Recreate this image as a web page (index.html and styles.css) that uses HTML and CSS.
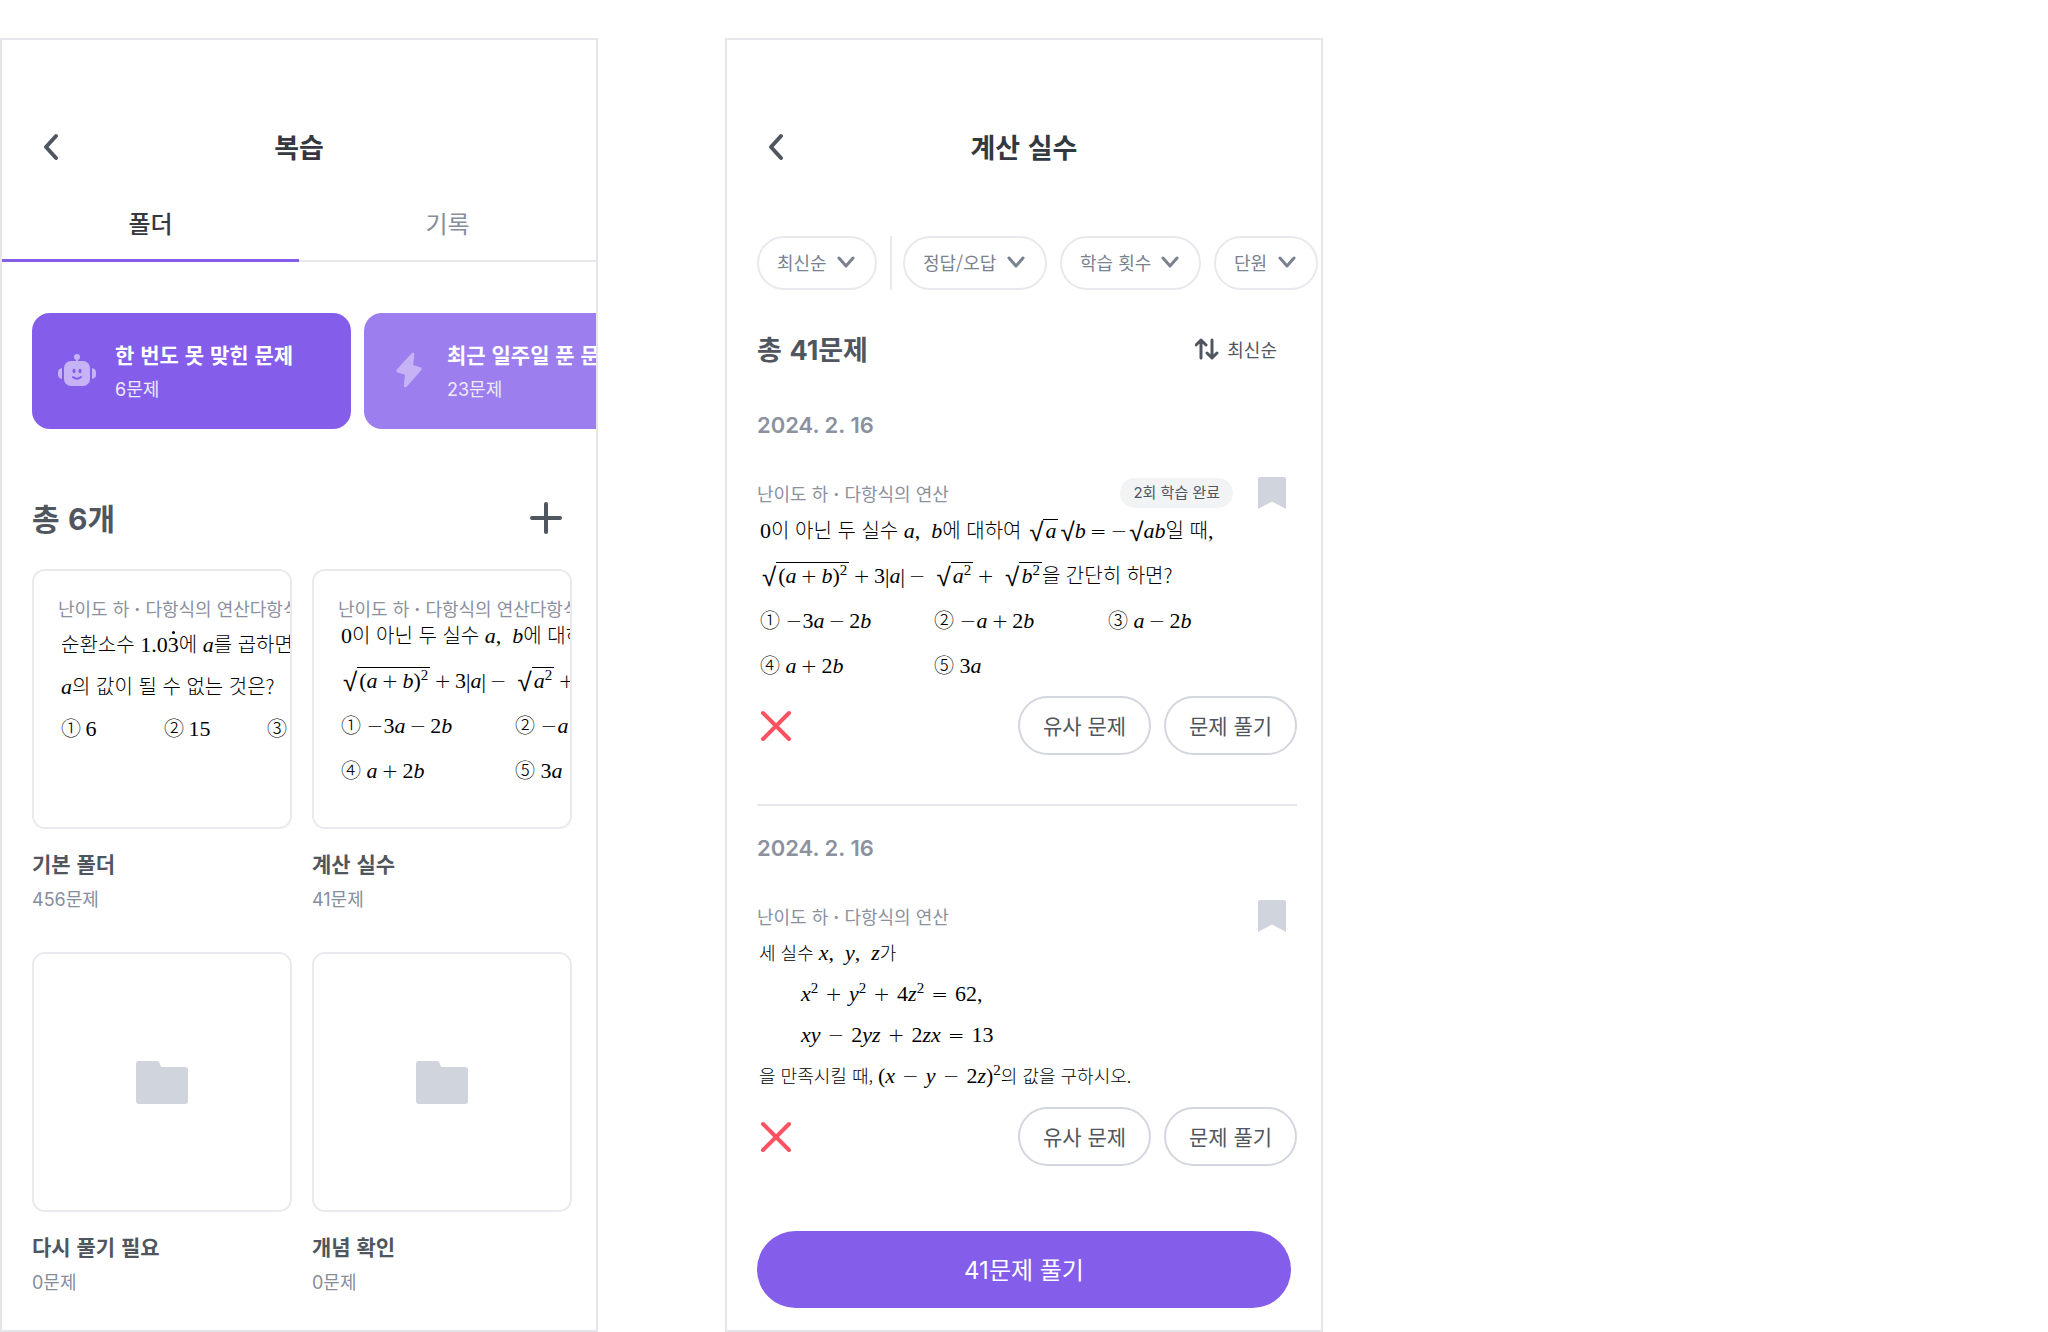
FILE: index.html
```
<!DOCTYPE html>
<html lang="ko">
<head>
  <meta charset="UTF-8" />
  <meta name="viewport" content="width=device-width, initial-scale=1.0"/>
  <title>복습</title>
  <link rel="stylesheet" href="styles.css">
</head>
<body>
  <!-- Folder screen -->
  <main class="phone">
    <header class="header">
      <button class="back" aria-label="뒤로"><svg width="16" height="28" viewBox="0 0 16 28"><path d="M13 3L3 14l10 11"/></svg></button>
      <h1>복습</h1>
    </header>
    <nav class="tabs">
      <button class="tab active">폴더</button>
      <button class="tab">기록</button>
    </nav>

    <section class="banners">
      <a class="banner" href="#">
        <svg class="banner-icon" width="40" height="34" viewBox="0 0 40 34">
          <circle cx="20" cy="4" r="3"/>
          <rect x="19" y="5" width="2" height="5"/>
          <rect x="7" y="8" width="26" height="25" rx="7"/>
          <path d="M5 15v11a5 5 0 0 1-4-5.500A5 5 0 0 1 5 15zM35 15v11a5 5 0 0 0 4-5.500A5 5 0 0 0 35 15z"/>
          <ellipse class="face" cx="17" cy="18" rx="1.500" ry="2.200"/>
          <ellipse class="face" cx="23" cy="18" rx="1.500" ry="2.200"/>
          <path class="smile" d="M16 24q4 3.500 8 0"/>
        </svg>
        <div>
          <h2>한 번도 못 맞힌 문제</h2>
          <p><span class="num">6</span>문제</p>
        </div>
      </a>
      <a class="banner light" href="#">
        <svg class="banner-icon" width="40" height="36" viewBox="0 0 40 36">
          <path d="M22.500 1.500c1.200-1.300 3-.6 2.800 1.200L24.200 13l7 2.200c1.600.5 2 2 .8 3.300L17.600 34.700c-1.200 1.200-3 .5-2.800-1.200L16 22.700l-7.200-2.200c-1.500-.5-1.900-2-.8-3.200z"/>
        </svg>
        <div>
          <h2>최근 일주일 푼 문제</h2>
          <p><span class="num">23</span>문제</p>
        </div>
      </a>
    </section>

    <div class="folders-head">
      <h2>총 <span class="num">6</span>개</h2>
      <button class="add" aria-label="폴더 추가"><svg width="32" height="32" viewBox="0 0 32 32"><path d="M16 2v28M2 16h28"/></svg></button>
    </div>

    <section class="folders">
      <article>
        <div class="thumb preview">
          <p class="label">난이도 하 <span class="num">·</span> 다항식의 연산다항식</p>
          <div class="problem compact">
            <p>순환소수 <b>1.0<span class="dot">3</span></b>에 <i>a</i>를 곱하면</p>
            <p><i>a</i>의 값이 될 수 없는 것은?</p>
            <ul class="choices narrow">
              <li>① <b>6</b></li>
              <li>② <b>15</b></li>
              <li>③</li>
            </ul>
          </div>
        </div>
        <h3>기본 폴더</h3>
        <p class="count"><span class="num">456</span>문제</p>
      </article>
      <article>
        <div class="thumb preview">
          <p class="label">난이도 하 <span class="num">·</span> 다항식의 연산다항식</p>
          <div class="problem raised">
            <p><b>0</b>이 아닌 두 실수 <i>a</i><b>,&ensp;</b><i>b</i>에 대하여</p>
            <p><span class="root">√</span><span class="bar"><b>(</b><i>a</i><span class="op">+</span><i>b</i><b>)<sup>2</sup></b></span><span class="op">+</span><b>3|</b><i>a</i><b>|</b><span class="op">−</span><span class="root">√</span><span class="bar"><i>a</i><b><sup>2</sup></b></span><span class="op">+</span></p>
            <ul class="choices">
              <li>① <span class="sign">−</span><b>3</b><i>a</i><span class="op">−</span><b>2</b><i>b</i></li>
              <li>② <span class="sign">−</span><i>a</i></li>
            </ul>
            <ul class="choices">
              <li>④ <i>a</i><span class="op">+</span><b>2</b><i>b</i></li>
              <li>⑤ <b>3</b><i>a</i></li>
            </ul>
          </div>
        </div>
        <h3>계산 실수</h3>
        <p class="count"><span class="num">41</span>문제</p>
      </article>
      <article>
        <div class="thumb empty">
          <svg width="52" height="44" viewBox="0 0 52 44"><path d="M3 1h18q2 0 2.500 2l1 3q.5 1 2 1H49q3 0 3 3v31q0 3-3 3H3q-3 0-3-3V4q0-3 3-3z"/></svg>
        </div>
        <h3>다시 풀기 필요</h3>
        <p class="count"><span class="num">0</span>문제</p>
      </article>
      <article>
        <div class="thumb empty">
          <svg width="52" height="44" viewBox="0 0 52 44"><path d="M3 1h18q2 0 2.500 2l1 3q.5 1 2 1H49q3 0 3 3v31q0 3-3 3H3q-3 0-3-3V4q0-3 3-3z"/></svg>
        </div>
        <h3>개념 확인</h3>
        <p class="count"><span class="num">0</span>문제</p>
      </article>
    </section>
  </main>

  <!-- Problem list screen -->
  <main class="phone">
    <header class="header">
      <button class="back" aria-label="뒤로"><svg width="16" height="28" viewBox="0 0 16 28"><path d="M13 3L3 14l10 11"/></svg></button>
      <h1>계산 실수</h1>
    </header>

    <div class="filters">
      <label class="chip"><select aria-label="정렬"><option>최신순</option></select><svg width="18" height="12" viewBox="0 0 18 12"><path d="M2 2l7 8 7-8"/></svg></label>
      <span class="divider"></span>
      <label class="chip"><select aria-label="정답/오답"><option>정답/오답</option></select><svg width="18" height="12" viewBox="0 0 18 12"><path d="M2 2l7 8 7-8"/></svg></label>
      <label class="chip"><select aria-label="학습 횟수"><option>학습 횟수</option></select><svg width="18" height="12" viewBox="0 0 18 12"><path d="M2 2l7 8 7-8"/></svg></label>
      <label class="chip"><select aria-label="단원"><option>단원</option></select><svg width="18" height="12" viewBox="0 0 18 12"><path d="M2 2l7 8 7-8"/></svg></label>
    </div>

    <div class="list-head">
      <h2>총 <span class="num">41</span>문제</h2>
      <button class="sort"><svg width="24" height="22" viewBox="0 0 24 22"><path d="M6 20V2M1 7l5-5 5 5M17 2v18M12 15l5 5 5-5"/></svg>최신순</button>
    </div>

    <article class="item">
      <h3 class="date">2024. 2. 16</h3>
      <div class="meta">
        <p class="label">난이도 하 <span class="num">·</span> 다항식의 연산</p>
        <span class="badge"><span class="num">2</span>회 학습 완료</span>
        <button class="bookmark" aria-label="북마크"><svg width="28" height="32" viewBox="0 0 28 32"><path d="M2 0h24q2 0 2 2v30l-14-7.500L0 32V2q0-2 2-2z"/></svg></button>
      </div>
      <div class="problem">
        <p><b>0</b>이 아닌 두 실수 <i>a</i><b>,&ensp;</b><i>b</i>에 대하여 <span class="root">√</span><span class="bar"><i>a</i></span><span class="root">√</span><i>b</i><span class="op">=</span><span class="sign">−</span><span class="root">√</span><i>ab</i>일 때<b>,</b></p>
        <p><span class="root">√</span><span class="bar"><b>(</b><i>a</i><span class="op">+</span><i>b</i><b>)<sup>2</sup></b></span><span class="op">+</span><b>3|</b><i>a</i><b>|</b><span class="op">−</span><span class="root">√</span><span class="bar"><i>a</i><b><sup>2</sup></b></span><span class="op">+</span><span class="root">√</span><span class="bar"><i>b</i><b><sup>2</sup></b></span>을 간단히 하면?</p>
        <ul class="choices">
          <li>① <span class="sign">−</span><b>3</b><i>a</i><span class="op">−</span><b>2</b><i>b</i></li>
          <li>② <span class="sign">−</span><i>a</i><span class="op">+</span><b>2</b><i>b</i></li>
          <li>③ <i>a</i><span class="op">−</span><b>2</b><i>b</i></li>
        </ul>
        <ul class="choices">
          <li>④ <i>a</i><span class="op">+</span><b>2</b><i>b</i></li>
          <li>⑤ <b>3</b><i>a</i></li>
        </ul>
      </div>
      <div class="actions">
        <svg class="wrong" width="32" height="32" viewBox="0 0 32 32"><path d="M3 3l26 26M29 3L3 29"/></svg>
        <button class="pill">유사 문제</button>
        <button class="pill">문제 풀기</button>
      </div>
    </article>

    <article class="item">
      <h3 class="date">2024. 2. 16</h3>
      <div class="meta">
        <p class="label">난이도 하 <span class="num">·</span> 다항식의 연산</p>
        <button class="bookmark" aria-label="북마크"><svg width="28" height="32" viewBox="0 0 28 32"><path d="M2 0h24q2 0 2 2v30l-14-7.500L0 32V2q0-2 2-2z"/></svg></button>
      </div>
      <div class="problem small">
        <p>세 실수 <i>x</i><b>,&ensp;</b><i>y</i><b>,&ensp;</b><i>z</i>가</p>
        <p class="formula"><i>x</i><b><sup>2</sup></b><span class="op">+</span><i>y</i><b><sup>2</sup></b><span class="op">+</span><b>4</b><i>z</i><b><sup>2</sup></b><span class="op">=</span><b>62,</b></p>
        <p class="formula"><i>xy</i><span class="op">−</span><b>2</b><i>yz</i><span class="op">+</span><b>2</b><i>zx</i><span class="op">=</span><b>13</b></p>
        <p>을 만족시킬 때, <b>(</b><i>x</i><span class="op">−</span><i>y</i><span class="op">−</span><b>2</b><i>z</i><b>)<sup>2</sup></b>의 값을 구하시오.</p>
      </div>
      <div class="actions">
        <svg class="wrong" width="32" height="32" viewBox="0 0 32 32"><path d="M3 3l26 26M29 3L3 29"/></svg>
        <button class="pill">유사 문제</button>
        <button class="pill">문제 풀기</button>
      </div>
    </article>

    <button class="solve"><span class="num">41</span>문제 풀기</button>
  </main>
</body>
</html>
```
FILE: styles.css
```
* {
  margin: 0;
  padding: 0;
  box-sizing: border-box;
}

body {
  display: flex;
  gap: 127px;
  padding-top: 38px;
  background: #fff;
  color: #505660;
  font-family: "Noto Sans CJK KR", sans-serif;
}

button,
select {
  border: none;
  background: none;
  color: inherit;
  font-family: inherit;
  cursor: pointer;
}

svg {
  display: block;
  flex-shrink: 0;
}

.num,
.date {
  font-family: Inter, sans-serif;
}

.num {
  line-height: 1;
}

.phone {
  flex: 0 1 598px;
  min-width: 0;
  min-height: calc(100vh - 38px);
  padding: 72px 24px 22px 30px;
  border: 2px solid #e5e6eb;
  overflow: hidden;
}

/* header */
.header {
  display: grid;
  grid-template-columns: 40px 1fr 40px;
  align-items: center;
  height: 70px;
  margin-right: 6px;
}

.header h1 {
  color: #343840;
  font-size: 27px;
  font-weight: 700;
  line-height: 40px;
  text-align: center;
}

.back {
  padding-left: 11px;
}

.back path,
.add path {
  fill: none;
  stroke: #505660;
  stroke-width: 4;
  stroke-linecap: round;
  stroke-linejoin: round;
}

/* tabs */
.tabs {
  display: flex;
  height: 80px;
  margin: 0 -24px 0 -30px;
  box-shadow: inset 0 -2px #e8e9ee;
}

.tab {
  flex: 1;
  padding-top: 4px;
  border-bottom: 3px solid transparent;
  color: #868e9c;
  font-size: 24px;
}

.tab.active {
  border-color: #845eea;
  color: #343840;
  font-weight: 500;
}

/* banners */
.banners {
  display: flex;
  gap: 13px;
  margin: 51px -24px 0 0;
  overflow: hidden;
}

.banner {
  flex: 0 0 319px;
  display: flex;
  align-items: center;
  gap: 18px;
  height: 116px;
  padding: 0 0 2px 25px;
  border-radius: 18px;
  background: #845eea;
  color: #fff;
  text-decoration: none;
  white-space: nowrap;
}

.banner.light {
  background: #9c7eee;
}

.banner h2 {
  margin-bottom: 6px;
  font-size: 21px;
  font-weight: 700;
  line-height: 30px;
}

.banner p {
  color: #eeeaf8;
  font-size: 18px;
  line-height: 26px;
}

.banner-icon {
  fill: #c5b3f6;
}

.banner-icon .face {
  fill: #845eea;
}

.banner-icon .smile {
  fill: none;
  stroke: #845eea;
  stroke-width: 2;
  stroke-linecap: round;
}

/* folders */
.folders-head {
  display: flex;
  justify-content: space-between;
  align-items: center;
  height: 60px;
  margin: 59px 0 21px;
  padding-right: 10px;
}

.folders-head h2 {
  padding-bottom: 2px;
  font-size: 30px;
  font-weight: 700;
  line-height: 44px;
}

.folders {
  display: grid;
  grid-template-columns: repeat(2, minmax(0, 1fr));
  gap: 41px 20px;
}

.thumb {
  height: 260px;
  margin-bottom: 19px;
  border: 2px solid #e9eaef;
  border-radius: 13px;
  overflow: hidden;
  white-space: nowrap;
}

.preview {
  padding: 24px 0 0 24px;
}

.empty {
  display: flex;
  justify-content: center;
  align-items: center;
}

.empty path,
.bookmark path {
  fill: #d0d4dd;
}

.folders h3 {
  margin-bottom: 7px;
  font-size: 21px;
  font-weight: 700;
  line-height: 30px;
}

.count {
  color: #868e9c;
  font-size: 18px;
  line-height: 26px;
}

.label {
  color: #8b919e;
  font-size: 18px;
  line-height: 26px;
}

.label .num {
  font-weight: 700;
}

/* problem text */
.problem {
  margin-top: -3px;
  padding-left: 3px;
  color: #000;
  font-size: 20px;
  font-weight: 300;
  line-height: 45px;
  white-space: nowrap;
}

.problem.compact {
  margin-top: 2px;
  line-height: 42px;
}

.problem.raised {
  margin-top: -9px;
}

.problem.small {
  margin-top: -1px;
  padding: 0 0 2px 2px;
  font-size: 18px;
  line-height: 41px;
}

.problem p,
.choices {
  height: 1lh;
}

.problem i,
.problem b {
  font-family: "Liberation Serif", serif;
  font-size: 22px;
  font-weight: 400;
  line-height: 1;
}

.problem sup {
  font-size: 15px;
  line-height: 1;
  vertical-align: 8px;
}

.op,
.sign,
.root {
  font-family: "DejaVu Sans", sans-serif;
  font-size: 20px;
  font-weight: 200;
  line-height: 1;
}

.op {
  margin: 0 4px;
}

.small .op {
  margin: 0 7px;
}

.root {
  margin-left: 2px;
  font-size: 26px;
  vertical-align: -3px;
}

.op + .root {
  margin-left: 7px;
}

.bar {
  display: inline-block;
  padding: 0 2px;
  border-top: 1px solid #000;
  line-height: 20px;
}

.dot {
  position: relative;
}

.dot::before {
  content: "";
  position: absolute;
  top: -1px;
  left: 4px;
  width: 3px;
  height: 3px;
  border-radius: 50%;
  background: #000;
}

.formula {
  padding-left: 42px;
}

.choices {
  display: grid;
  grid-template-columns: repeat(3, 174px);
  list-style: none;
}

.choices.narrow {
  grid-template-columns: repeat(3, 103px);
}

/* filters */
.filters {
  display: flex;
  gap: 13px;
  margin: 54px -24px 0 0;
}

.chip {
  display: flex;
  align-items: center;
  gap: 10px;
  height: 54px;
  padding: 0 20px 2px 18px;
  border: 2px solid #e8e9ee;
  border-radius: 27px;
  color: #7a8290;
}

.chip select {
  appearance: none;
  font-size: 18px;
  line-height: 26px;
}

.chip path {
  fill: none;
  stroke: #7a8290;
  stroke-width: 3;
  stroke-linecap: round;
  stroke-linejoin: round;
}

.divider {
  width: 2px;
  margin-right: -2px;
  background: #e8e9ee;
}

/* list */
.list-head {
  display: flex;
  justify-content: space-between;
  align-items: center;
  margin: 39px 20px 41px 0;
}

.list-head h2 {
  font-size: 27px;
  font-weight: 700;
  line-height: 40px;
}

.sort {
  display: flex;
  align-items: center;
  gap: 8px;
  font-size: 18px;
}

.sort path {
  fill: none;
  stroke: #505660;
  stroke-width: 3;
  stroke-linecap: round;
  stroke-linejoin: round;
}

.item + .item {
  margin-top: 49px;
  padding-top: 27px;
  border-top: 2px solid #e5e7ec;
}

.date {
  color: #8b919e;
  font-size: 22px;
  font-weight: 600;
  line-height: 30px;
}

.meta {
  display: flex;
  align-items: center;
  gap: 25px;
  height: 34px;
  margin-top: 36px;
  padding-right: 11px;
}

.meta .label {
  flex: 1;
}

.badge {
  padding: 1px 13px 3px;
  border-radius: 15px;
  background: #f2f3f5;
  font-size: 15px;
  line-height: 26px;
}

.actions {
  display: flex;
  align-items: center;
  gap: 13px;
  margin-top: 9px;
}

.wrong {
  margin: 0 auto 0 3px;
}

.wrong path {
  fill: none;
  stroke: #fa5260;
  stroke-width: 4;
  stroke-linecap: round;
}

.pill {
  width: 133px;
  height: 59px;
  padding-bottom: 2px;
  border: 2px solid #d3d6de;
  border-radius: 30px;
  font-size: 21px;
}

.solve {
  display: block;
  width: calc(100% - 6px);
  height: 77px;
  margin-top: 65px;
  padding-bottom: 2px;
  border-radius: 39px;
  background: #845eea;
  color: #fff;
  font-size: 24px;
}
```
